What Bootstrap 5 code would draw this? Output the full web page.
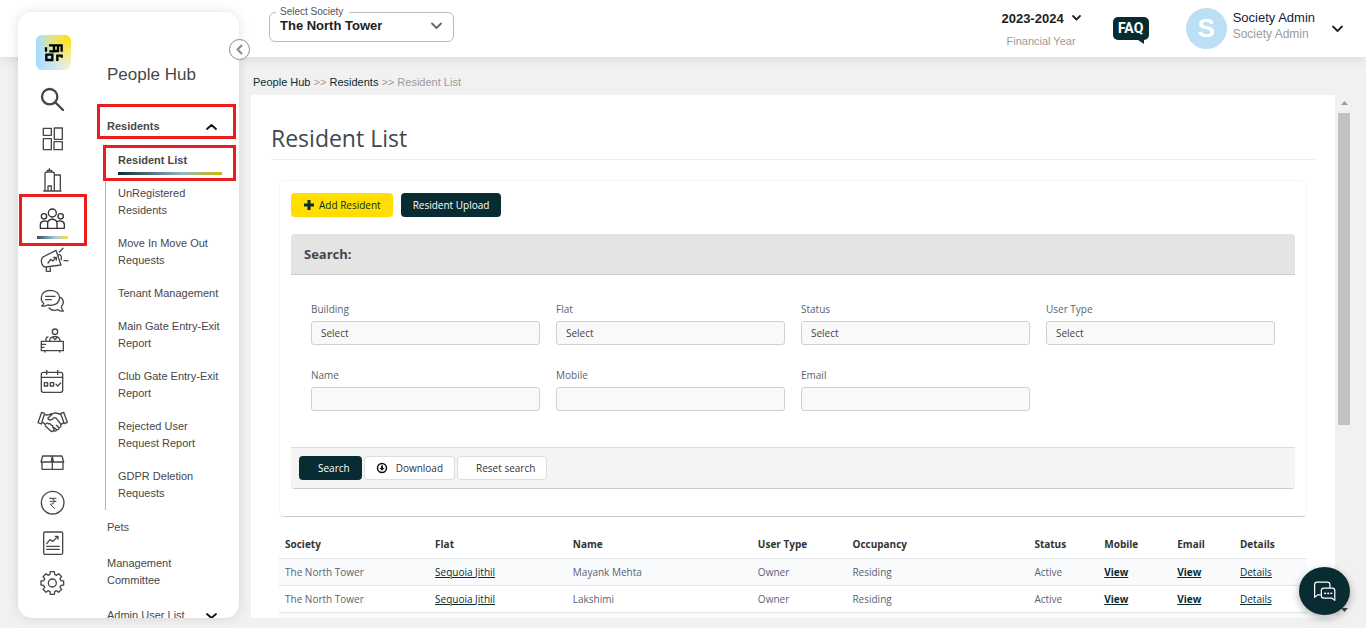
<!DOCTYPE html>
<html lang="en">
<head>
<meta charset="utf-8">
<meta name="viewport" content="width=device-width, initial-scale=1">
<title>Resident List</title>
<link href="https://cdn.jsdelivr.net/npm/bootstrap@5.3.0/dist/css/bootstrap.min.css" rel="stylesheet">
<style>
:root { --ink: #092c33; --sun: #ffde00; --mark-red: #ec1c1c; }
body { background: #f1f1f1; font-family: "Liberation Sans", Arial, sans-serif; font-size: 11px; line-height: 17px; color: #474747; }
.shell { display: grid; grid-template-columns: 239px minmax(0, 1fr); grid-template-rows: 57px minmax(0, 1fr); height: 100vh; overflow: hidden; }
.shell svg { display: block; overflow: visible; fill: none; stroke: currentColor; stroke-linecap: round; stroke-linejoin: round; }

/* top bar */
.topbar { grid-area: 1 / 1 / 2 / 3; box-shadow: 0 2px 12px rgba(0,0,0,.1); padding: 0 24px 0 269px; }
.society { width: 185px; height: 35px; margin: 2px 0 10px; padding: 0 8px 0 6px; border: 1px solid #bdbdbd; border-radius: 6px; }
.society legend { float: none; width: auto; margin: 0; padding: 0 6px 0 4px; font-size: 10px; line-height: 10px; color: #555; }
.society select { appearance: none; border: 0; background: none; font-size: 13px; line-height: 17px; font-weight: 700; color: #222; padding: 0 4px; }
.society .caret { color: #666; }
.year { font-size: 13px; font-weight: 700; color: #222; }
.muted { color: #9b9b9b; }
.faq { position: relative; width: 36px; height: 23px; border-radius: 5px; background: var(--ink); color: #fff; font: 700 14px/23px Roboto, sans-serif; }
.faq::after { content: ""; position: absolute; right: 5px; bottom: -4px; border-left: 6px solid transparent; border-top: 4px solid var(--ink); }
.avatar { width: 41px; height: 41px; margin-left: 13px; background: #bbdff4; color: #fff; font-size: 26px; }
.user { padding: 0 18px 5px 6px; }
.user-name { font-size: 13px; color: #16213a; }
.user-role { font-size: 12px; }

/* side panel */
.side { grid-area: 1 / 1 / 3 / 2; position: relative; margin: 12px 0 10px 18px; }
.side-card { background: #fff; border-radius: 14px; box-shadow: 0 0 12px rgba(0,0,0,.12); overflow: hidden; }
.rail { width: 69px; padding: 23px 0 15px; }
.rail .logo { width: 35px; height: 35px; margin-left: 2px; border-radius: 6px; background: radial-gradient(circle at 90% 5%, #ffdf0a 0, rgba(255,223,10,0) 65%), linear-gradient(to right, #a6dcff, #f2f4dc); }
.rail ul { margin-top: 9px; }
.rail li a { position: relative; width: 69px; padding-right: 2px; color: #474747; }
.rail li svg { width: 24px; height: 24px; stroke-width: 4; }
.rail .is-open svg { color: #333; }
.red-box { position: relative; }
.red-box::before { content: ""; position: absolute; border: 3px solid var(--mark-red); pointer-events: none; }
.rail .red-box::before { inset: -6px 0 -6px 1px; }
.rail .red-box::after { content: ""; position: absolute; left: 19px; bottom: 1px; width: 31px; height: 3px; background: linear-gradient(to right, #35525b, #a9cde0 60%, #f5df34); }
.menu-col { padding: 53px 3px 0 10px; }
.menu-col h2 { font-size: 17px; line-height: 20px; margin: 0 0 24px 10px; }
.menu-col a { color: #474747; text-decoration: none; display: block; }
.menu-col .entry { padding: 9px 10px 10px; }
.menu-col .group-head { padding: 9px 20px 9px 10px; font-weight: 700; }
.group-head .caret { color: #111; }
.group-head.red-box::before { inset: -5px 0 5px 0; }
.sub-menu { margin-left: 8px; border-left: 1px solid #b7b7b7; }
.sub-menu a { padding: 8px 8px 8px 12px; }
.sub-menu .red-box { font-weight: 700; }
.sub-menu .red-box::before { inset: 1px 0 -4px -3px; }
.sub-menu .red-box::after { content: ""; position: absolute; left: 12px; right: 14px; bottom: 2px; height: 3px; background: linear-gradient(to right, var(--ink), #96b6c5 62%, #cdb800); }
.caret { width: 9px; height: 6px; stroke-width: 1.8; }
.collapse-btn { position: absolute; right: -11px; top: 27px; width: 21px; height: 21px; border: 1px solid #8c8c8c; border-radius: 50%; background: #fff; color: #888; z-index: 2; }

/* content */
.work { grid-area: 2 / 2 / 3 / 3; padding: 17px 15px 10px 12px; }
.crumbs { padding: 0 0 4px 2px; }
.crumbs a { color: var(--ink); text-decoration: none; }
.pane { font-family: "Open Sans", sans-serif; font-size: 10px; line-height: 14px; background: #fff; overflow: hidden; padding: 27px 20px 0; color: #5b6270; }
.pane h1 { font-size: 23px; line-height: 32px; font-weight: 500; color: #414751; border-bottom: 1px solid #eee; margin: 0 0 20px; padding-bottom: 5px; }
.sheet { margin: 0 8px 14px; padding: 12px 11px 27px; border: 1px solid #f6f6f6; border-bottom-color: #ccc; border-radius: 5px; }
.act { font-size: 10px; line-height: 12px; height: 24px; border-radius: 4px; padding: 0 11px 1px; border: 1px solid transparent; color: #333; display: inline-flex; align-items: center; }
.act-sun { background: var(--sun); color: var(--ink); }
.act-ink { background: var(--ink); color: #fff; }
.act-plain { background: #fff; border-color: #ddd; }
.act-indent { padding-left: 18px; }
.act svg { width: 12px; height: 12px; }
.finder { margin-top: 17px; border-bottom: 1px solid #ccc; border-radius: 4px; overflow: hidden; }
.finder-head { background: #e4e4e4; border-bottom: 1px solid #ccc; padding: 11px 13px; font-size: 13px; line-height: 18px; font-weight: 700; color: #414751; margin: 0; }
.finder-body { display: grid; grid-template-columns: repeat(4, minmax(0, 1fr)); gap: 23px 16px; padding: 27px 20px 36px; }
.finder-body label { display: block; margin-bottom: 5px; }
.finder-body .form-control { height: 24px; min-height: 24px; padding: 0 9px; font-size: 10px; line-height: 14px; color: #444; background: #f9f9f9; border: 1px solid #d0d0d0; border-radius: 3px; }
.finder-foot { background: #f4f4f4; border-top: 1px solid #ddd; padding: 8px; gap: 2px; }
.roster { table-layout: fixed; width: 100%; }
.roster th, .roster td { padding: 6px; height: 27px; border-bottom: 1px solid #e2e5e8; white-space: nowrap; }
.roster th { color: #333; font-weight: 700; }
.roster tbody tr:nth-child(odd) { background: #f8fafc; }
.roster a { color: var(--ink); }

/* scroll gutter */
.gutter { width: 16px; flex: none; padding: 6px 1px 6px 3px; }
.gutter .thumb { height: 61%; background: #c1c1c1; }
.gutter svg { width: 7px; height: 4px; fill: #9d9d9d; stroke: none; }
.help-fab { position: fixed; right: 16px; bottom: 13px; width: 51px; height: 48px; border: 0; border-radius: 50%; background: var(--ink); color: #fff; box-shadow: 0 3px 8px rgba(0,0,0,.3); }
.help-fab svg { width: 22px; height: 21px; stroke-width: 4; }
</style>
</head>
<body>
<div class="shell">
  <header class="topbar bg-white d-flex align-items-center justify-content-between">
    <fieldset class="society">
      <legend><label for="society">Select Society</label></legend>
      <div class="d-flex align-items-center justify-content-between pe-1">
        <select id="society" class="flex-fill"><option>The North Tower</option></select>
        <svg class="caret" viewBox="0 0 9 6"><path d="M0 0.5 4.5 5 9 0.5"/></svg>
      </div>
    </fieldset>
    <div class="d-flex align-items-center">
      <div class="text-center me-4 pt-1">
        <button type="button" class="btn p-0 border-0 year d-flex align-items-center gap-2 lh-1 mb-1 pb-1">2023-2024 <svg class="caret" viewBox="0 0 9 6"><path d="M1 1 4.5 4.5 8 1"/></svg></button>
        <div class="muted">Financial Year</div>
      </div>
      <a href="#" class="faq ms-2 me-4 text-center text-decoration-none">FAQ</a>
      <div class="avatar rounded-circle fw-bold d-flex align-items-center justify-content-center">S</div>
      <div class="user">
        <div class="user-name">Society Admin</div>
        <div class="user-role muted">Society Admin</div>
      </div>
      <button type="button" class="btn p-0 border-0" aria-label="Account menu"><svg class="caret" viewBox="0 0 9 6"><path d="M0 0.5 4.5 5 9 0.5"/></svg></button>
    </div>
  </header>

  <aside class="side">
    <div class="side-card d-flex h-100">
      <nav class="rail d-flex flex-column align-items-center flex-shrink-0" aria-label="Modules">
        <a href="#" class="logo" aria-label="Home"><svg width="35" height="35" viewBox="0 0 105 105" style="color:#000" stroke-width="7"><path d="M30 50V37M39 31H77V50M54 31V49H40M54 48H66V34M31 59H49V75H31ZM64 78V62H77V68" style="stroke-linecap:butt;stroke-linejoin:miter"/></svg></a>
        <ul class="list-unstyled mb-0 flex-fill d-flex flex-column">
          <li class="flex-fill d-flex"><a href="#" aria-label="Search" class="d-flex align-items-center justify-content-center"><svg viewBox="0 0 72 72" style="stroke-width:7"><circle cx="29" cy="29" r="23"/><path d="M46 46 69 69"/></svg></a></li>
          <li class="flex-fill d-flex"><a href="#" aria-label="Dashboard" class="d-flex align-items-center justify-content-center"><svg viewBox="0 0 72 72"><rect x="10" y="4" width="24" height="21"/><rect x="43" y="3" width="24" height="34"/><rect x="10" y="35" width="24" height="33"/><rect x="42" y="44" width="25" height="24"/></svg></a></li>
          <li class="flex-fill d-flex"><a href="#" aria-label="Buildings" class="d-flex align-items-center justify-content-center"><svg viewBox="0 0 72 72"><path d="M15 69V18Q15 12 21 12H37Q43 12 43 18V69M22 12V7H35V12M28 7V2M43 21H61V69M11 69H63M24 69V54H34V69"/></svg></a></li>
          <li class="flex-fill d-flex is-open"><a href="#" aria-label="People Hub" class="red-box d-flex align-items-center justify-content-center"><svg viewBox="0 0 72 72"><circle cx="37" cy="15" r="12"/><circle cx="12" cy="25" r="8"/><circle cx="62" cy="25" r="8"/><path d="M23 61V44Q24 36 37 33Q50 36 51 44V61ZM23 61H1V49Q2 40 12 39Q18 38 23 42M51 61H73V49Q72 40 62 39Q56 38 51 42"/></svg></a></li>
          <li class="flex-fill d-flex"><a href="#" aria-label="Announcements" class="d-flex align-items-center justify-content-center"><svg viewBox="0 0 72 72"><path d="M9 27 48 7 63 51 17 57Q10 58 6 48Q1 34 9 27M19 57V70H31V55M56 20Q66 19 64 35M58 12 69 1M72 38H84M24 45 32 34 38 39 49 28M41 28H49V36"/></svg></a></li>
          <li class="flex-fill d-flex"><a href="#" aria-label="Discussions" class="d-flex align-items-center justify-content-center"><svg viewBox="0 0 72 72"><path d="M11 43Q3 36 4 26Q6 4 31 4Q57 5 59 26Q57 48 32 49Q28 49 23 48Q15 53 5 51Q11 48 11 43M17 22H45M17 32H34M62 25Q77 37 64 54Q64 61 70 66Q59 67 54 62Q37 68 27 57"/></svg></a></li>
          <li class="flex-fill d-flex"><a href="#" aria-label="Front desk" class="d-flex align-items-center justify-content-center"><svg viewBox="0 0 72 72"><circle cx="45" cy="8" r="8"/><path d="M29 36Q29 23 45 22Q60 23 60 36M38 24 45 32 52 24M18 36V29Q19 24 24 24M4 37H70V65H4ZM4 46H17M4 55H12M15 65V69M59 65V69"/></svg></a></li>
          <li class="flex-fill d-flex"><a href="#" aria-label="Calendar" class="d-flex align-items-center justify-content-center"><svg viewBox="0 0 72 72"><rect x="4" y="10" width="64" height="60" rx="6"/><path d="M4 25H68M20 4V16M53 4V16M13 41H23V51H13ZM31 41H41V51H31ZM48 46 53 51 62 42"/></svg></a></li>
          <li class="flex-fill d-flex"><a href="#" aria-label="Vendors" class="d-flex align-items-center justify-content-center"><svg viewBox="0 0 72 72"><path d="M5 7 14 10 4 42-6 38ZM62 11 71 7 82 37 73 41ZM13 14Q25 17 35 11M7 37Q12 38 16 44M62 14Q50 7 40 10L24 24Q24 30 31 30Q38 29 42 23Q48 22 52 29L62 42M16 44Q22 36 26 42Q31 39 34 46Q40 46 38 53Q45 54 40 63Q36 67 30 61L16 48M40 61Q47 66 50 59L43 53M50 59Q57 60 57 53L49 46M57 53Q65 52 62 44L72 38"/></svg></a></li>
          <li class="flex-fill d-flex"><a href="#" aria-label="Parcels" class="d-flex align-items-center justify-content-center"><svg viewBox="0 0 72 72"><path d="M8 18H66L71 36H3ZM6 36V58H69V36M37 18V58"/><path d="M37 20 34 35H40Z" fill="currentColor"/></svg></a></li>
          <li class="flex-fill d-flex"><a href="#" aria-label="Accounts" class="d-flex align-items-center justify-content-center"><svg viewBox="0 0 72 72"><circle cx="38" cy="38" r="34"/><path d="M30 25H48M30 34H48M30 25Q43 25 43 34Q43 43 31 43L43 55" style="stroke-width:3"/></svg></a></li>
          <li class="flex-fill d-flex"><a href="#" aria-label="Reports" class="d-flex align-items-center justify-content-center"><svg viewBox="0 0 72 72"><rect x="11" y="3" width="57" height="67" rx="4"/><path d="M20 38 30 26 39 31 53 16M46 16H54V24M20 46H58M20 55H58"/></svg></a></li>
          <li class="flex-fill d-flex"><a href="#" aria-label="Settings" class="d-flex align-items-center justify-content-center"><svg viewBox="-37 -36 72 72"><circle r="12"/><path d="M-7-26-6-34H6L7-26 13-23 19-28 28-19 23-13 26-7 34-6V6L26 7 23 13 28 19 19 28 13 23 7 26 6 34H-6L-7 26-13 23-19 28-28 19-23 13-26 7-34 6V-6L-26-7-23-13-28-19-19-28-13-23Z"/></svg></a></li>
        </ul>
      </nav>
      <nav class="menu-col flex-fill" aria-label="People Hub">
        <h2 class="fw-normal">People Hub</h2>
        <a href="#" class="group-head red-box d-flex align-items-center justify-content-between">Residents <svg class="caret" viewBox="0 0 9 6"><path d="M0 5 4.5 1 9 5"/></svg></a>
        <div class="sub-menu">
          <a href="#" class="red-box">Resident List</a>
          <a href="#">UnRegistered Residents</a>
          <a href="#">Move In Move Out Requests</a>
          <a href="#" class="text-nowrap">Tenant Management</a>
          <a href="#">Main Gate Entry-Exit Report</a>
          <a href="#">Club Gate Entry-Exit Report</a>
          <a href="#">Rejected User Request Report</a>
          <a href="#">GDPR Deletion Requests</a>
        </div>
        <a href="#" class="entry">Pets</a>
        <a href="#" class="entry">Management<br>Committee</a>
        <a href="#" class="group-head fw-normal d-flex align-items-center justify-content-between pt-2">Admin User List <svg class="caret" viewBox="0 0 9 6"><path d="M0 1 4.5 5 9 1"/></svg></a>
      </nav>
    </div>
    <button type="button" class="collapse-btn p-0 d-flex align-items-center justify-content-center" aria-label="Collapse menu"><svg width="5" height="9" viewBox="0 0 5 9" stroke-width="2"><path d="M4.5 0.5 0.5 4.5 4.5 8.5"/></svg></button>
  </aside>

  <div class="work d-flex flex-column">
    <nav class="crumbs muted" aria-label="Breadcrumb"><a href="#">People Hub</a> &gt;&gt; <a href="#">Residents</a> &gt;&gt; Resident List</nav>
    <div class="d-flex flex-fill overflow-hidden">
      <main class="pane flex-fill">
        <h1>Resident List</h1>
        <section class="sheet">
          <div class="d-flex gap-2">
            <button type="button" class="act act-sun gap-1"><svg viewBox="0 0 12 12"><path d="M4.500 1h3v3.500H11v3H7.500V11h-3V7.500H1v-3h3.500z" fill="currentColor" stroke="none"/></svg>Add Resident</button>
            <button type="button" class="act act-ink">Resident Upload</button>
          </div>
          <form class="finder">
            <h2 class="finder-head">Search:</h2>
            <div class="finder-body">
              <div><label for="building">Building</label><select id="building" class="form-control"><option>Select</option></select></div>
              <div><label for="flat">Flat</label><select id="flat" class="form-control"><option>Select</option></select></div>
              <div><label for="status">Status</label><select id="status" class="form-control"><option>Select</option></select></div>
              <div><label for="usertype">User Type</label><select id="usertype" class="form-control"><option>Select</option></select></div>
              <div><label for="name">Name</label><input id="name" type="text" class="form-control"></div>
              <div><label for="mobile">Mobile</label><input id="mobile" type="text" class="form-control"></div>
              <div><label for="email">Email</label><input id="email" type="email" class="form-control"></div>
            </div>
            <div class="finder-foot d-flex">
              <button type="submit" class="act act-ink act-indent">Search</button>
              <button type="button" class="act act-plain gap-2"><svg viewBox="0 0 12 12" style="color:#111"><circle cx="6" cy="6" r="4.500" stroke-width="1.500"/><path d="M5 3.500H7V6H8.500L6 8.800 3.500 6H5Z" fill="currentColor" stroke="none"/></svg>Download</button>
              <button type="reset" class="act act-plain act-indent">Reset search</button>
            </div>
          </form>
        </section>
        <div class="px-2">
          <table class="roster">
            <colgroup><col style="width:14.6%"><col style="width:13.4%"><col style="width:18%"><col style="width:9.2%"><col style="width:17.7%"><col style="width:6.8%"><col style="width:7.1%"><col style="width:6.1%"><col style="width:7.1%"></colgroup>
            <thead><tr><th>Society</th><th>Flat</th><th>Name</th><th>User Type</th><th>Occupancy</th><th>Status</th><th>Mobile</th><th>Email</th><th>Details</th></tr></thead>
            <tbody>
              <tr><td>The North Tower</td><td><a href="#">Sequoia Jithil</a></td><td>Mayank Mehta</td><td>Owner</td><td>Residing</td><td>Active</td><td><a href="#" class="fw-bold">View</a></td><td><a href="#" class="fw-bold">View</a></td><td><a href="#">Details</a></td></tr>
              <tr><td>The North Tower</td><td><a href="#">Sequoia Jithil</a></td><td>Lakshimi</td><td>Owner</td><td>Residing</td><td>Active</td><td><a href="#" class="fw-bold">View</a></td><td><a href="#" class="fw-bold">View</a></td><td><a href="#">Details</a></td></tr>
              <tr><td></td><td></td><td></td><td></td><td></td><td></td><td></td><td></td><td></td></tr>
            </tbody>
          </table>
        </div>
      </main>
      <div class="gutter d-flex flex-column align-items-center" aria-hidden="true">
        <svg class="flex-shrink-0 mb-2" viewBox="0 0 7 4"><path d="M0 4 3.500 0 7 4z"/></svg>
        <div class="thumb w-100"></div>
        <svg class="flex-shrink-0 mt-auto" viewBox="0 0 7 4"><path d="M0 0 3.500 4 7 0z" fill="#444"/></svg>
      </div>
    </div>
  </div>
  <button type="button" class="help-fab p-0 d-flex align-items-center justify-content-center" aria-label="Open chat"><svg viewBox="0 0 72 66"><path d="M2 52V10Q2 2 10 2H44Q52 2 52 10V18M2 52 12 44H20M32 22H60Q68 22 68 30V62L59 55H32Q24 55 24 47V30Q24 22 32 22Z"/><path d="M36 39H37M46 39H47M56 39H57" stroke-width="6"/></svg></button>
</div>
<script src="https://cdn.jsdelivr.net/npm/bootstrap@5.3.0/dist/js/bootstrap.bundle.min.js"></script>
</body>
</html>
